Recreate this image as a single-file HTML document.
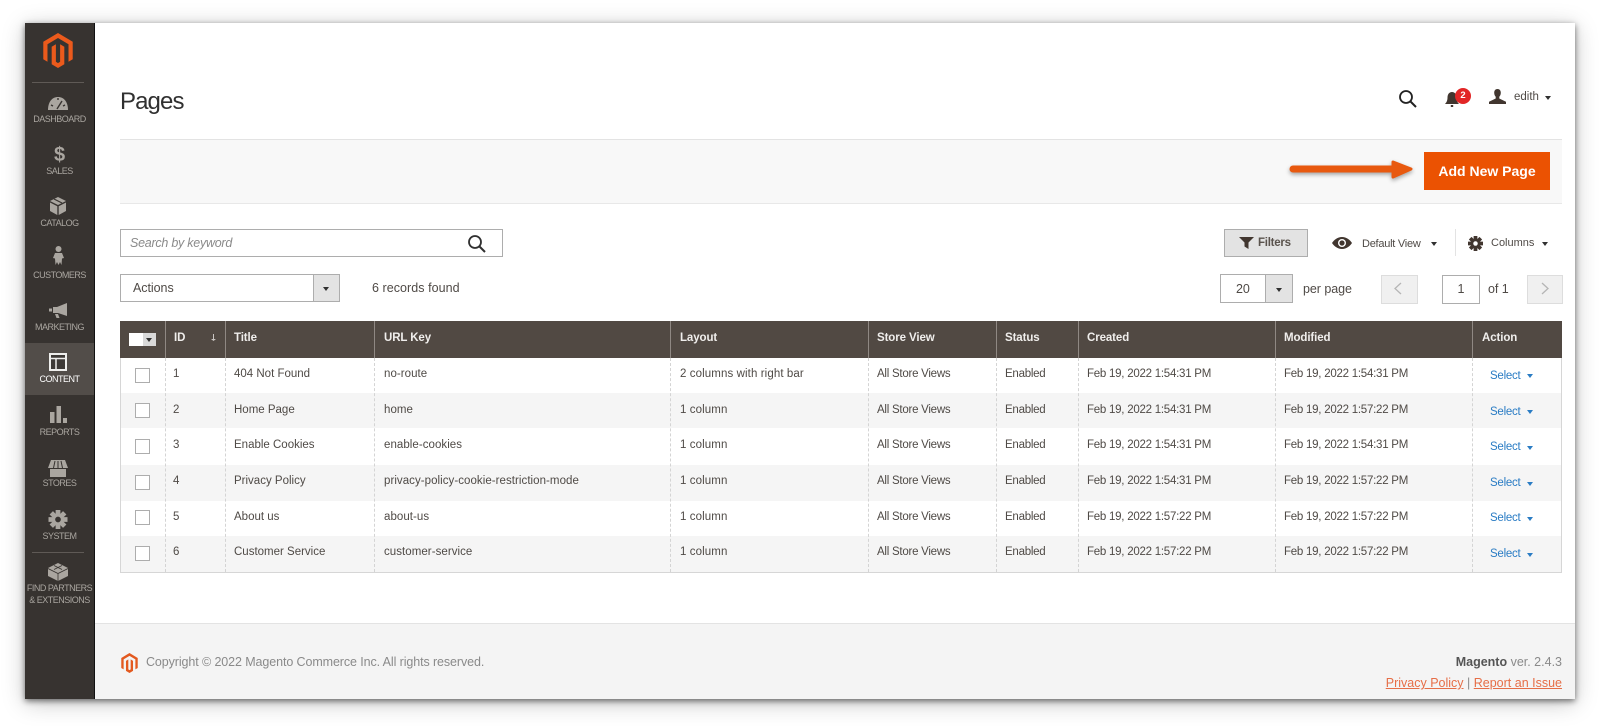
<!DOCTYPE html>
<html lang="en"><head><meta charset="utf-8"><title>Pages</title>
<style>
html,body{margin:0;padding:0;background:#fff}
body{position:relative;width:1600px;height:726px;overflow:hidden;font-family:"Liberation Sans",Arial,sans-serif;color:#4f4a46;font-size:11.5px;letter-spacing:-.25px}
#card{position:absolute;left:25px;top:23px;width:1550px;height:676px;background:#fff;box-shadow:0 2px 6px rgba(0,0,0,.55),0 4px 22px rgba(0,0,0,.22)}
.a,.t,svg{position:absolute}
.t{white-space:nowrap;line-height:16px}
#side{position:absolute;left:25px;top:23px;width:69px;height:676px;background:#373330;border-right:1px solid #111}
.l{position:absolute;left:25px;width:69px;text-align:center;color:#aaa6a0;font-size:9px;letter-spacing:-.5px;line-height:12px;white-space:nowrap}
.head{position:absolute;left:120px;top:321px;width:1442px;height:37px;background:#514943}
.sep{position:absolute;top:321px;height:37px;width:1px;background:#8f8883}
.dash{position:absolute;top:358px;height:214px;border-left:1px dashed #d4d4d4}
.h{position:absolute;top:330px;line-height:16px;color:#f0eeec;font-weight:bold;font-size:11.5px;letter-spacing:-.1px;white-space:nowrap}
.row{position:absolute;left:120px;width:1442px}
.row.e{background:#f5f5f5}
.row span{position:absolute;white-space:nowrap;line-height:16px}
.row i{position:absolute;left:15px;width:13px;height:13px;border:1px solid #adadad;background:#fff}
.c1{left:53px}.c2{left:114px;letter-spacing:0}.c3{left:264px;letter-spacing:.05px}.c4{left:560px;letter-spacing:.1px}.c5{left:757px}.c6{left:885px}.c7{left:967px}.c8{left:1164px}
.row .s{left:1370px;color:#2a7cc4}
.row b{position:absolute;left:1407px;width:0;height:0;border:3.5px solid transparent;border-top:4.5px solid #2a7cc4;border-bottom:0}
.tri{position:absolute;width:0;height:0;border:3.5px solid transparent;border-top:4.5px solid #303030;border-bottom:0}
.f{font-size:12.5px;letter-spacing:-.05px}
a{color:#e66e47}
</style></head><body>
<div id="card"></div>
<div id="side"></div>

<svg style="left:41px;top:33px" width="34" height="35" viewBox="0 0 24 24" preserveAspectRatio="none"><path fill="#eb5a1c" d="M12 24l-4.455-2.572v-12l2.97-1.715v12.001l1.485.902 1.485-.902V7.713l2.971 1.715v12L12 24zM22.391 6v12l-2.969 1.714V7.713L12 3.43 4.574 7.713v12.001L1.609 18V6L12 0l10.391 6z"/></svg>
<div class="a" style="left:32px;top:82px;width:52px;height:1px;background:#5f5a56"></div>

<svg style="left:48px;top:97px" width="20" height="13" viewBox="0 0 20 13"><path fill="#aaa6a0" d="M0 13C0 5 4 0 10 0s10 5 10 13z"/><path stroke="#373330" stroke-width="1.4" d="M9 12l5-8M3 8l2 1M10 1v2M17 8l-2 1"/></svg>
<div class="l" style="top:113px">DASHBOARD</div>
<div class="a" style="left:25px;width:69px;top:143px;text-align:center;font-size:20px;font-weight:bold;line-height:24px;color:#aaa6a0;letter-spacing:0">$</div>
<div class="l" style="top:165px">SALES</div>
<svg style="left:50px;top:197px" width="16" height="18" viewBox="0 0 16 18"><path fill="#aaa6a0" d="M8 0l8 4-8 4-8-4zM0 5.5l7.3 3.8V18L0 14zM16 5.5L8.700 9.300V18l7.300-4z"/><path stroke="#373330" stroke-width="1.2" d="M4 2l8 4"/></svg>
<div class="l" style="top:217px">CATALOG</div>
<svg style="left:53px;top:246px" width="11" height="19" viewBox="0 0 11 19"><circle cx="5.500" cy="3" r="3" fill="#aaa6a0"/><path fill="#aaa6a0" d="M2 7h7l2 5-2 .5-.5 6.500-1.500-3-1.500 3-1.500-3L2.500 19 2 12.500 0 12z"/></svg>
<div class="l" style="top:269px">CUSTOMERS</div>
<svg style="left:49px;top:303px" width="18" height="15" viewBox="0 0 18 15"><path fill="#aaa6a0" d="M18 0v13L9 10H4V4h4zM0 5.500h3v3H0zM6 11h3l1.500 4H7.500z"/></svg>
<div class="l" style="top:321px">MARKETING</div>
<div class="a" style="left:25px;top:343px;width:69px;height:52px;background:#524d49"></div>
<svg style="left:49px;top:353px" width="18" height="18" viewBox="0 0 18 18"><rect x="1" y="1" width="16" height="16" fill="#3d3936" stroke="#eeeeec" stroke-width="2"/><path stroke="#eeeeec" stroke-width="1.500" fill="none" d="M2 5.500h14M7 5.500V16"/></svg>
<div class="l" style="top:373px;color:#fff">CONTENT</div>
<svg style="left:50px;top:406px" width="17" height="17" viewBox="0 0 17 17"><path fill="#aaa6a0" d="M0 6h4.500v11H0zM6.500 0H11v17H6.500zM13 12h4v5h-4z"/></svg>
<div class="l" style="top:426px">REPORTS</div>
<svg style="left:48px;top:460px" width="20" height="17" viewBox="0 0 20 17"><path fill="#aaa6a0" d="M3 0h14l3 8H0zM2 9h16v8H2z"/><path stroke="#373330" d="M7 1L5.500 8M10 1v7M13 1l1.500 7"/></svg>
<div class="l" style="top:477px">STORES</div>
<svg style="left:48px;top:510px" width="20" height="19" viewBox="-10 -10 20 20"><g fill="#aaa6a0"><rect x="-2.500" y="-10" width="5" height="20"/><rect x="-2.500" y="-10" width="5" height="20" transform="rotate(45)"/><rect x="-2.500" y="-10" width="5" height="20" transform="rotate(90)"/><rect x="-2.500" y="-10" width="5" height="20" transform="rotate(135)"/></g><circle r="5.800" fill="#aaa6a0"/><circle r="3" fill="#373330"/></svg>
<div class="l" style="top:530px">SYSTEM</div>
<div class="a" style="left:32px;top:552px;width:52px;height:1px;background:#5f5a56"></div>
<svg style="left:48px;top:562px" width="20" height="19" viewBox="0 0 20 19"><path fill="#aaa6a0" d="M10 1l10 5v8l-10 5-10-5V6z"/><path stroke="#373330" stroke-width=".8" fill="none" d="M0 6.500l10 5 10-5M10 11.500V19M6 3.500l8 4M14 3.500l-8 4"/></svg>
<div class="l" style="top:582px">FIND PARTNERS</div>
<div class="l" style="top:594px">&amp; EXTENSIONS</div>

<div class="t" style="left:120px;top:86px;font-size:24px;line-height:32px;letter-spacing:-.9px;color:#303030">Pages</div>
<svg style="left:1398px;top:90px" width="20" height="18" viewBox="0 0 20 18"><circle cx="8" cy="7" r="6" fill="none" stroke="#222" stroke-width="1.800"/><path stroke="#222" stroke-width="2" d="M12.500 11.500l5.500 5.500"/></svg>
<svg style="left:1445px;top:92px" width="14" height="15" viewBox="0 0 14 15"><path fill="#41362f" d="M7 0c3 0 4.500 2.500 4.500 5.500 0 3 1 5 2.500 6.500H0c1.500-1.500 2.500-3.500 2.500-6.500C2.500 2.500 4 0 7 0zM5.800 13h2.400v2H5.800z"/></svg>
<div class="a" style="left:1455px;top:88px;width:16px;height:16px;border-radius:50%;background:#e22626;color:#fff;font-size:9.500px;font-weight:bold;line-height:16px;text-align:center;letter-spacing:0">2</div>
<svg style="left:1489px;top:89px" width="17" height="15" viewBox="0 0 17 15"><path fill="#41362f" d="M8.500 0c2.200 0 3.300 1.600 3.300 3.800 0 1.700-.7 3.200-1.500 4v1.700l6.700 3.300V15H0v-2.200l6.700-3.300V7.800c-.8-.8-1.500-2.300-1.500-4C5.200 1.600 6.300 0 8.500 0z"/></svg>
<div class="t" style="left:1514px;top:89px;letter-spacing:0">edith</div>
<div class="tri" style="left:1545px;top:96px"></div>

<div class="a" style="left:120px;top:139px;width:1442px;height:63px;background:#f8f8f8;border-top:1px solid #e3e3e3;border-bottom:1px solid #e8e8e8"></div>
<svg style="left:1285px;top:155px;overflow:visible" width="132" height="30" viewBox="0 0 132 30"><g style="filter:drop-shadow(0 2px 2px rgba(0,0,0,.35))"><path stroke="#e8590f" stroke-width="7" stroke-linecap="round" d="M8 14h104"/><path fill="#e8590f" stroke="#e8590f" stroke-width="3" stroke-linejoin="round" d="M108 7l18 7-18 8z"/></g></svg>
<div class="a" style="left:1424px;top:152px;width:126px;height:38px;background:#eb5202;color:#fff;font-size:14px;font-weight:bold;line-height:38px;text-align:center;letter-spacing:0">Add New Page</div>

<div class="a" style="left:120px;top:229px;width:381px;height:26px;border:1px solid #adadad"></div>
<div class="t" style="left:130px;top:235px;font-style:italic;color:#8a8a8a;font-size:12.500px">Search by keyword</div>
<svg style="left:467px;top:235px" width="20" height="18" viewBox="0 0 20 18"><circle cx="8" cy="7" r="6" fill="none" stroke="#303030" stroke-width="1.800"/><path stroke="#303030" stroke-width="2" d="M12.500 11.500l5.500 5.500"/></svg>

<div class="a" style="left:1224px;top:229px;width:82px;height:26px;background:#e3e3e3;border:1px solid #adadad"></div>
<svg style="left:1239px;top:237px" width="15" height="12" viewBox="0 0 15 12"><path fill="#41362f" d="M0 0h15L9.500 5.500V12L5.500 9.500v-4z"/></svg>
<div class="t" style="left:1258px;top:235px;font-weight:bold;color:#5a534d">Filters</div>
<svg style="left:1332px;top:236px" width="20" height="14" viewBox="0 0 20 14"><path fill="#41362f" d="M10 1c4.500 0 8 3 10 6-2 3-5.500 6-10 6S2 10 0 7c2-3 5.500-6 10-6z"/><circle cx="10" cy="7" r="4" fill="#fff"/><circle cx="10" cy="7" r="2.600" fill="#41362f"/></svg>
<div class="t" style="left:1362px;top:236px;font-size:11px">Default View</div>
<div class="tri" style="left:1431px;top:242px"></div>
<div class="a" style="left:1455px;top:229px;width:1px;height:27px;background:#e3e3e3"></div>
<svg style="left:1468px;top:236px" width="15" height="15" viewBox="-10 -10 20 20"><g fill="#41362f"><rect x="-2.500" y="-10" width="5" height="20"/><rect x="-2.500" y="-10" width="5" height="20" transform="rotate(45)"/><rect x="-2.500" y="-10" width="5" height="20" transform="rotate(90)"/><rect x="-2.500" y="-10" width="5" height="20" transform="rotate(135)"/></g><circle r="5.800" fill="#41362f"/><circle r="3" fill="#fff"/></svg>
<div class="t" style="left:1491px;top:235px;font-size:11px;letter-spacing:0">Columns</div>
<div class="tri" style="left:1542px;top:242px"></div>

<div class="a" style="left:120px;top:274px;width:218px;height:26px;border:1px solid #adadad"></div>
<div class="a" style="left:313px;top:274px;width:27px;height:28px;box-sizing:border-box;background:#e3e3e3;border:1px solid #adadad"></div>
<div class="tri" style="left:323px;top:287px"></div>
<div class="t f" style="left:133px;top:280px">Actions</div>
<div class="t f" style="left:372px;top:280px;letter-spacing:.05px">6 records found</div>

<div class="a" style="left:1220px;top:274px;width:71px;height:27px;border:1px solid #adadad"></div>
<div class="a" style="left:1265px;top:274px;width:28px;height:29px;box-sizing:border-box;background:#e3e3e3;border:1px solid #adadad"></div>
<div class="tri" style="left:1276px;top:288px"></div>
<div class="t f" style="left:1236px;top:281px">20</div>
<div class="t f" style="left:1303px;top:281px">per page</div>
<div class="a" style="left:1381px;top:275px;width:35px;height:27px;background:#f0f0f0;border:1px solid #ddd"></div>
<svg style="left:1393px;top:282px" width="10" height="13" viewBox="0 0 10 13"><path fill="none" stroke="#b5b5b5" stroke-width="1.300" d="M8 1L2 6.500 8 12"/></svg>
<div class="a f" style="left:1442px;top:275px;width:36px;height:27px;border:1px solid #adadad;text-align:center;line-height:27px">1</div>
<div class="t f" style="left:1488px;top:281px">of 1</div>
<div class="a" style="left:1527px;top:275px;width:34px;height:27px;background:#f0f0f0;border:1px solid #ddd"></div>
<svg style="left:1540px;top:282px" width="10" height="13" viewBox="0 0 10 13"><path fill="none" stroke="#b5b5b5" stroke-width="1.300" d="M2 1l6 5.500L2 12"/></svg>

<div class="row"  style="top:358px;height:35px"><i style="top:10px"></i><span class="c1" style="top:8px">1</span><span class="c2" style="top:8px">404 Not Found</span><span class="c3" style="top:8px">no-route</span><span class="c4" style="top:8px">2 columns with right bar</span><span class="c5" style="top:8px">All Store Views</span><span class="c6" style="top:8px">Enabled</span><span class="c7" style="top:8px">Feb 19, 2022 1:54:31 PM</span><span class="c8" style="top:8px">Feb 19, 2022 1:54:31 PM</span><span class="s" style="top:10px">Select</span><b style="top:16px"></b></div>
<div class="row e" style="top:393px;height:35px"><i style="top:10px"></i><span class="c1" style="top:9px">2</span><span class="c2" style="top:9px">Home Page</span><span class="c3" style="top:9px">home</span><span class="c4" style="top:9px">1 column</span><span class="c5" style="top:9px">All Store Views</span><span class="c6" style="top:9px">Enabled</span><span class="c7" style="top:9px">Feb 19, 2022 1:54:31 PM</span><span class="c8" style="top:9px">Feb 19, 2022 1:57:22 PM</span><span class="s" style="top:11px">Select</span><b style="top:17px"></b></div>
<div class="row"  style="top:428px;height:37px"><i style="top:11px"></i><span class="c1" style="top:9px">3</span><span class="c2" style="top:9px">Enable Cookies</span><span class="c3" style="top:9px">enable-cookies</span><span class="c4" style="top:9px">1 column</span><span class="c5" style="top:9px">All Store Views</span><span class="c6" style="top:9px">Enabled</span><span class="c7" style="top:9px">Feb 19, 2022 1:54:31 PM</span><span class="c8" style="top:9px">Feb 19, 2022 1:54:31 PM</span><span class="s" style="top:11px">Select</span><b style="top:18px"></b></div>
<div class="row e" style="top:465px;height:36px"><i style="top:10px"></i><span class="c1" style="top:8px">4</span><span class="c2" style="top:8px">Privacy Policy</span><span class="c3" style="top:8px">privacy-policy-cookie-restriction-mode</span><span class="c4" style="top:8px">1 column</span><span class="c5" style="top:8px">All Store Views</span><span class="c6" style="top:8px">Enabled</span><span class="c7" style="top:8px">Feb 19, 2022 1:54:31 PM</span><span class="c8" style="top:8px">Feb 19, 2022 1:57:22 PM</span><span class="s" style="top:10px">Select</span><b style="top:17px"></b></div>
<div class="row"  style="top:501px;height:35px"><i style="top:9px"></i><span class="c1" style="top:8px">5</span><span class="c2" style="top:8px">About us</span><span class="c3" style="top:8px">about-us</span><span class="c4" style="top:8px">1 column</span><span class="c5" style="top:8px">All Store Views</span><span class="c6" style="top:8px">Enabled</span><span class="c7" style="top:8px">Feb 19, 2022 1:57:22 PM</span><span class="c8" style="top:8px">Feb 19, 2022 1:57:22 PM</span><span class="s" style="top:9px">Select</span><b style="top:16px"></b></div>
<div class="row e" style="top:536px;height:36px"><i style="top:10px"></i><span class="c1" style="top:8px">6</span><span class="c2" style="top:8px">Customer Service</span><span class="c3" style="top:8px">customer-service</span><span class="c4" style="top:8px">1 column</span><span class="c5" style="top:8px">All Store Views</span><span class="c6" style="top:8px">Enabled</span><span class="c7" style="top:8px">Feb 19, 2022 1:57:22 PM</span><span class="c8" style="top:8px">Feb 19, 2022 1:57:22 PM</span><span class="s" style="top:10px">Select</span><b style="top:17px"></b></div>

<div class="head"></div>
<div class="a" style="left:120px;top:358px;width:0;height:214px;border-left:1px solid #d6d6d6"></div>
<div class="a" style="left:1561px;top:358px;width:0;height:214px;border-left:1px solid #d6d6d6"></div>
<div class="a" style="left:120px;top:572px;width:1442px;height:1px;background:#d6d6d6"></div>
<div class="sep" style="left:165px"></div><div class="sep" style="left:225px"></div><div class="sep" style="left:374px"></div><div class="sep" style="left:670px"></div><div class="sep" style="left:868px"></div><div class="sep" style="left:996px"></div><div class="sep" style="left:1078px"></div><div class="sep" style="left:1275px"></div><div class="sep" style="left:1472px"></div>
<div class="dash" style="left:165px"></div><div class="dash" style="left:225px"></div><div class="dash" style="left:374px"></div><div class="dash" style="left:670px"></div><div class="dash" style="left:868px"></div><div class="dash" style="left:996px"></div><div class="dash" style="left:1078px"></div><div class="dash" style="left:1275px"></div><div class="dash" style="left:1472px"></div>
<div class="a" style="left:129px;top:333px;width:14px;height:13px;background:#fff"></div>
<div class="a" style="left:143px;top:333px;width:13px;height:13px;background:#d9d9d9"></div>
<div class="tri" style="left:146px;top:338px"></div>
<div class="h" style="left:174px">ID</div>
<svg style="left:211px;top:334px" width="5" height="7" viewBox="0 0 5 7"><path fill="#c9c5c2" d="M2 0h1v5h2L2.500 7 0 5h2z"/></svg>
<div class="h" style="left:234px">Title</div>
<div class="h" style="left:384px">URL Key</div>
<div class="h" style="left:680px">Layout</div>
<div class="h" style="left:877px">Store View</div>
<div class="h" style="left:1005px">Status</div>
<div class="h" style="left:1087px">Created</div>
<div class="h" style="left:1284px">Modified</div>
<div class="h" style="left:1482px">Action</div>

<div class="a" style="left:95px;top:623px;width:1480px;height:76px;background:#f4f4f4;border-top:1px solid #e3e3e3;box-sizing:border-box"></div>
<svg style="left:120px;top:653px" width="19" height="20" viewBox="0 0 24 24" preserveAspectRatio="none"><path fill="#e3591f" d="M12 24l-4.455-2.572v-12l2.97-1.715v12.001l1.485.902 1.485-.902V7.713l2.971 1.715v12L12 24zM22.391 6v12l-2.969 1.714V7.713L12 3.430 4.574 7.713v12.001L1.609 18V6L12 0l10.391 6z"/></svg>
<div class="t" style="left:146px;top:654px;font-size:12.500px;color:#8a8a8a;letter-spacing:-.1px">Copyright © 2022 Magento Commerce Inc. All rights reserved.</div>
<div class="t" style="right:38px;top:654px;font-size:12.500px;color:#8a8a8a;letter-spacing:0"><strong style="color:#555">Magento</strong> ver. 2.4.3</div>
<div class="t" style="right:38px;top:675px;font-size:12.500px;color:#8a8a8a;letter-spacing:0"><a href="#">Privacy Policy</a> | <a href="#">Report an Issue</a></div>
</body></html>
